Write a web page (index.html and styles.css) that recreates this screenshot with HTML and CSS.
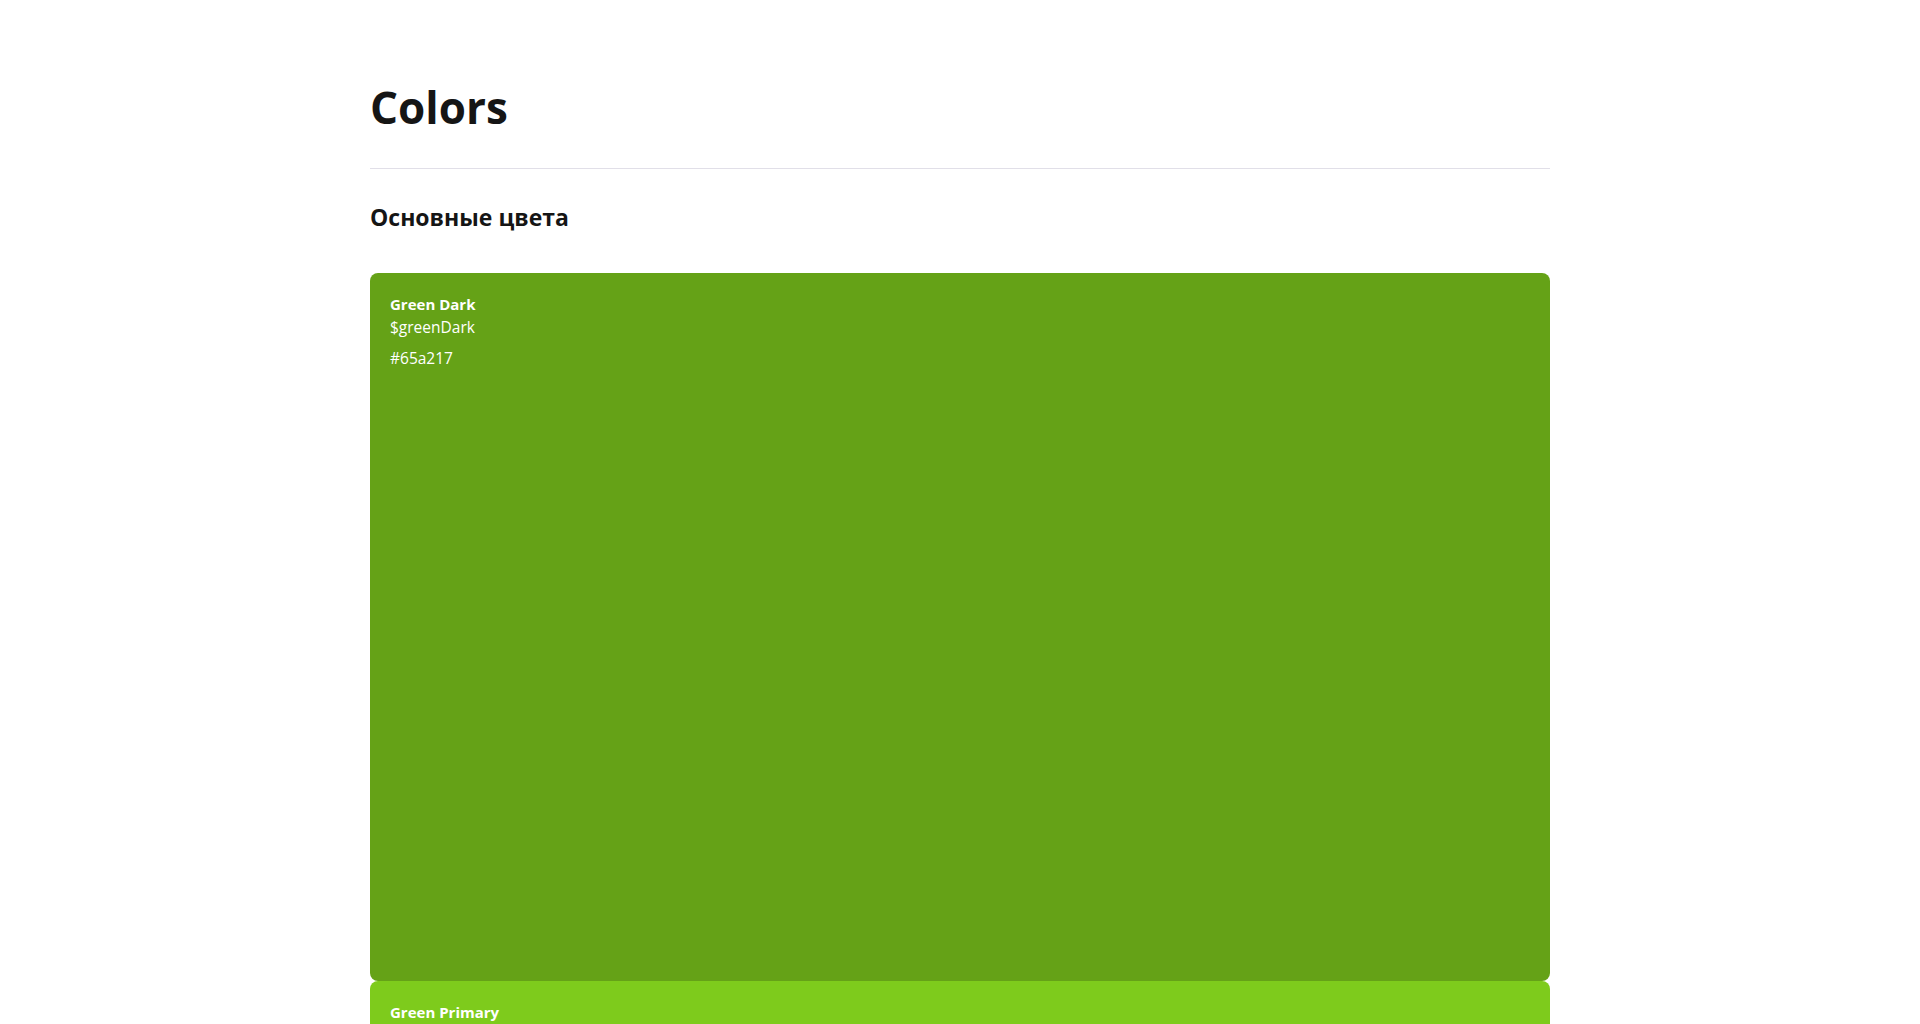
FILE: index.html
```html
<!DOCTYPE html>
<html lang="ru">
<head>
<meta charset="utf-8">
<title>Colors</title>
<link rel="stylesheet" href="styles.css">
</head>
<body>
<main class="page">
  <h1 class="page-title">Colors</h1>
  <hr class="divider">
  <h2 class="section-title">Основные цвета</h2>
  <div class="swatches">
    <div class="swatch swatch--green-dark">
      <div class="swatch-name">Green Dark</div>
      <div class="swatch-var">$greenDark</div>
      <div class="swatch-hex">#65a217</div>
    </div>
    <div class="swatch swatch--green-primary">
      <div class="swatch-name">Green Primary</div>
      <div class="swatch-var">$greenPrimary</div>
      <div class="swatch-hex">#7ecb1c</div>
    </div>
  </div>
</main>
</body>
</html>
```
FILE: styles.css
```css
* { box-sizing: border-box; }
html, body { margin: 0; padding: 0; background: #ffffff; }
body {
  font-family: "Open Sans", "Noto Sans", sans-serif;
  color: #151515;
}
.page {
  width: 1180px;
  margin: 0 auto;
  padding-top: 82px;
}
.page-title {
  margin: 0;
  font-size: 44px;
  line-height: 50px;
  font-weight: 700;
}
.divider {
  margin: 36px 0 0;
  border: 0;
  border-top: 1px solid #e1dfe8;
  height: 0;
}
.section-title {
  margin: 33px 0 0;
  font-size: 23px;
  line-height: 30px;
  font-weight: 700;
}
.swatches {
  margin-top: 41px;
  display: flex;
  flex-direction: column;
}
.swatch {
  aspect-ratio: 5 / 3;
  border-radius: 8px;
  padding: 20px;
  color: #ffffff;
  font-size: 15.5px;
  line-height: 23px;
}
.swatch--green-dark { background: #65a217; }
.swatch--green-primary { background: #7ecb1c; }
.swatch-name { font-weight: 700; font-size: 15px; }
.swatch-hex { margin-top: 8px; }
```
